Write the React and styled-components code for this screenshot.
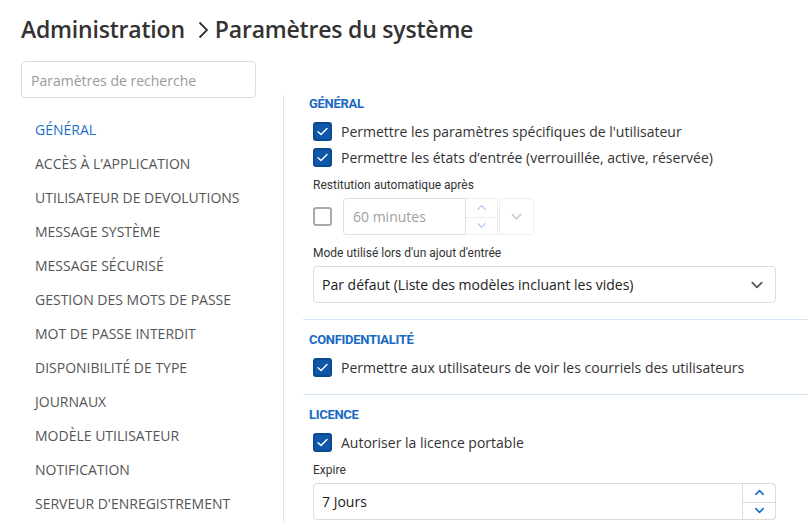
import React from "react";
import styled, { createGlobalStyle } from "styled-components";

const GlobalStyle = createGlobalStyle`
  html, body {
    margin: 0;
    padding: 0;
    background: #ffffff;
    font-family: "Open Sans", "Liberation Sans", sans-serif;
    color: #333333;
  }
  * { box-sizing: border-box; }
`;

// Styled components
const Page = styled.div`
  width: 808px;
  height: 523px;
  overflow: hidden;
  padding: 13px 0 0 21px;
`;

const Title = styled.h1`
  margin: 0;
  display: flex;
  align-items: center;
  height: 32px;
  font-size: 23px;
  font-weight: 600;
  color: #333333;
  letter-spacing: -0.2px;

  svg {
    margin: 2px 6px 0 13px;
  }
`;

const Layout = styled.div`
  display: grid;
  grid-template-columns: 262px 1fr;
  margin-top: 16px;
`;

const Sidebar = styled.aside`
  display: flex;
  flex-direction: column;
`;

const Search = styled.input`
  width: 235px;
  height: 37px;
  border: 1px solid #dcdcdc;
  border-radius: 4px;
  padding: 1px 9px 0;
  font-family: "Open Sans", "Liberation Sans", sans-serif;
  font-size: 14px;
  color: #333;
  outline: none;

  &::placeholder {
    color: #9a9a9a;
  }
`;

const Nav = styled.ul`
  list-style: none;
  margin: 14px 0 0;
  padding: 0 0 0 14px;
`;

const NavItem = styled.li`
  height: 34px;
  display: flex;
  align-items: center;
  font-size: 14px;
  text-transform: uppercase;
  color: ${(p) => (p.active ? "#1b6fc8" : "#555555")};
`;

const Content = styled.main`
  margin-top: 34px;
  border-left: 1px solid #e6e6e6;
  padding-left: 19px;
  min-height: 500px;
`;

const Section = styled.section`
  padding: ${(p) => (p.first ? "0" : "11px")} 0 ${(p) => p.pb || 0}px 0;
  border-bottom: ${(p) => (p.last ? "none" : "1px solid #d3e5f5")};
`;

const SectionTitle = styled.h2`
  margin: 0 0 5px 6px;
  height: 18px;
  line-height: 18px;
  font-family: Roboto, "Liberation Sans", sans-serif;
  font-size: 13px;
  font-weight: 700;
  color: #1769c2;
  letter-spacing: -0.3px;
`;

const Fields = styled.div`
  padding-left: 10px;
  padding-right: 32px;
`;

const CheckRow = styled.label`
  display: flex;
  align-items: center;
  height: 26px;
  gap: 9px;
  font-size: 14px;
  color: #333;
`;

const Box = styled.span`
  width: 19px;
  height: 19px;
  border-radius: 3px;
  display: flex;
  align-items: center;
  justify-content: center;
  flex-shrink: 0;
  background: ${(p) => (p.checked ? "#0f58a9" : "#ffffff")};
  border: 2px solid ${(p) => (p.checked ? "#0b4a91" : "#a9a9a9")};
`;

const FieldLabel = styled.div`
  margin-top: ${(p) => p.mt || 7}px;
  height: 16px;
  line-height: 16px;
  font-family: Roboto, "Liberation Sans", sans-serif;
  font-size: 12px;
  color: #333;
`;

const InlineRow = styled.div`
  margin-top: 5px;
  display: flex;
  align-items: center;
  height: 37px;
`;

const NumberGroup = styled.div`
  margin-left: 11px;
  display: flex;
  height: 37px;
`;

const NumberInput = styled.div`
  width: 122px;
  height: 37px;
  border: 1px solid #e0e0e0;
  border-right: none;
  border-radius: 4px 0 0 4px;
  display: flex;
  align-items: center;
  padding-left: 9px;
  font-size: 14px;
  color: #a0a0a0;
`;

const Spin = styled.div`
  width: ${(p) => p.w || 34}px;
  flex-shrink: 0;
  display: grid;
  grid-template-rows: 1fr 1fr;
  border: 1px solid ${(p) => (p.disabled ? "#eeeeee" : "#dcdcdc")};
  border-left: 1px solid ${(p) => (p.disabled ? "#e0e0e0" : "#dcdcdc")};
  border-radius: ${(p) => (p.disabled ? "0" : "0 4px 4px 0")};
  margin: ${(p) => (p.disabled ? "0" : "-1px -1px -1px 0")};

  span {
    display: flex;
    align-items: center;
    justify-content: center;
  }
  span + span {
    border-top: 1px solid ${(p) => (p.disabled ? "#eeeeee" : "#dcdcdc")};
  }
`;

const DropButton = styled.div`
  width: 35px;
  height: 37px;
  margin-left: 1px;
  border: 1px solid #eeeeee;
  border-radius: 4px;
  display: flex;
  align-items: center;
  justify-content: center;
`;

const Field = styled.div`
  margin-top: 5px;
  height: 37px;
  display: flex;
  border: 1px solid #dcdcdc;
  border-radius: 4px;
  font-size: 14px;
  color: #222;
`;

const FieldValue = styled.div`
  flex: 1;
  display: flex;
  align-items: center;
  padding-left: 8px;
`;

const Caret = styled.div`
  width: 36px;
  display: flex;
  align-items: center;
  justify-content: center;
`;

const Chevron = ({ dir = "down", color = "#555", size = 12, stroke = 1.6 }) => {
  const pts = {
    down: "2,4 6,8 10,4",
    up: "2,8 6,4 10,8",
    right: "4,2 8,6 4,10",
  }[dir];
  return (
    <svg width={size} height={size} viewBox="0 0 12 12">
      <polyline points={pts} fill="none" stroke={color} strokeWidth={stroke} strokeLinecap="round" strokeLinejoin="round" />
    </svg>
  );
};

const Check = ({ checked, children }) => (
  <CheckRow>
    <Box checked={checked}>
      {checked && (
        <svg width="13" height="13" viewBox="0 0 13 13">
          <polyline points="2,6.8 5,9.6 11,3.4" fill="none" stroke="#fff" strokeWidth="1.4" strokeLinecap="round" strokeLinejoin="round" />
        </svg>
      )}
    </Box>
    {children}
  </CheckRow>
);

const navItems = [
  "Général",
  "Accès à l’application",
  "Utilisateur de Devolutions",
  "Message système",
  "Message sécurisé",
  "Gestion des mots de passe",
  "Mot de passe interdit",
  "Disponibilité de type",
  "Journaux",
  "Modèle utilisateur",
  "Notification",
  "Serveur d'enregistrement",
];

const App = () => {
  return (
    <Page>
      <GlobalStyle />
      <Title>
        Administration
        <svg width="11" height="18" viewBox="0 0 11 18">
          <polyline points="1.5,1.5 9,9 1.5,16.5" fill="none" stroke="#333" strokeWidth="1.8" strokeLinejoin="miter" />
        </svg>
        Paramètres du système
      </Title>
      <Layout>
        <Sidebar>
          <Search placeholder="Paramètres de recherche" />
          <Nav>
            {navItems.map((item, i) => (
              <NavItem key={item} active={i === 0}>
                {item}
              </NavItem>
            ))}
          </Nav>
        </Sidebar>
        <Content>
          <Section first pb={16}>
            <SectionTitle>GÉNÉRAL</SectionTitle>
            <Fields>
              <Check checked>Permettre les paramètres spécifiques de l'utilisateur</Check>
              <Check checked>Permettre les états d’entrée (verrouillée, active, réservée)</Check>
              <FieldLabel>Restitution automatique après</FieldLabel>
              <InlineRow>
                <Box />
                <NumberGroup>
                  <NumberInput>60 minutes</NumberInput>
                  <Spin disabled w={33}>
                    <span>
                      <Chevron dir="up" color="#a9c8ea" size={11} stroke={1.3} />
                    </span>
                    <span>
                      <Chevron dir="down" color="#a9c8ea" size={11} stroke={1.3} />
                    </span>
                  </Spin>
                  <DropButton>
                    <Chevron dir="down" color="#c4c4c4" size={13} stroke={1.3} />
                  </DropButton>
                </NumberGroup>
              </InlineRow>
              <FieldLabel mt={10}>Mode utilisé lors d'un ajout d'entrée</FieldLabel>
              <Field>
                <FieldValue>Par défaut (Liste des modèles incluant les vides)</FieldValue>
                <Caret>
                  <Chevron dir="down" color="#555" size={14} stroke={1.6} />
                </Caret>
              </Field>
            </Fields>
          </Section>
          <Section pb={14}>
            <SectionTitle>CONFIDENTIALITÉ</SectionTitle>
            <Fields>
              <Check checked>Permettre aux utilisateurs de voir les courriels des utilisateurs</Check>
            </Fields>
          </Section>
          <Section last>
            <SectionTitle>LICENCE</SectionTitle>
            <Fields>
              <Check checked>Autoriser la licence portable</Check>
              <FieldLabel>Expire</FieldLabel>
              <Field>
                <FieldValue>7 Jours</FieldValue>
                <Spin w={34}>
                  <span>
                    <Chevron dir="up" color="#1a6fd0" size={11} stroke={1.8} />
                  </span>
                  <span>
                    <Chevron dir="down" color="#1a6fd0" size={11} stroke={1.8} />
                  </span>
                </Spin>
              </Field>
            </Fields>
          </Section>
        </Content>
      </Layout>
    </Page>
  );
};

export default App;
